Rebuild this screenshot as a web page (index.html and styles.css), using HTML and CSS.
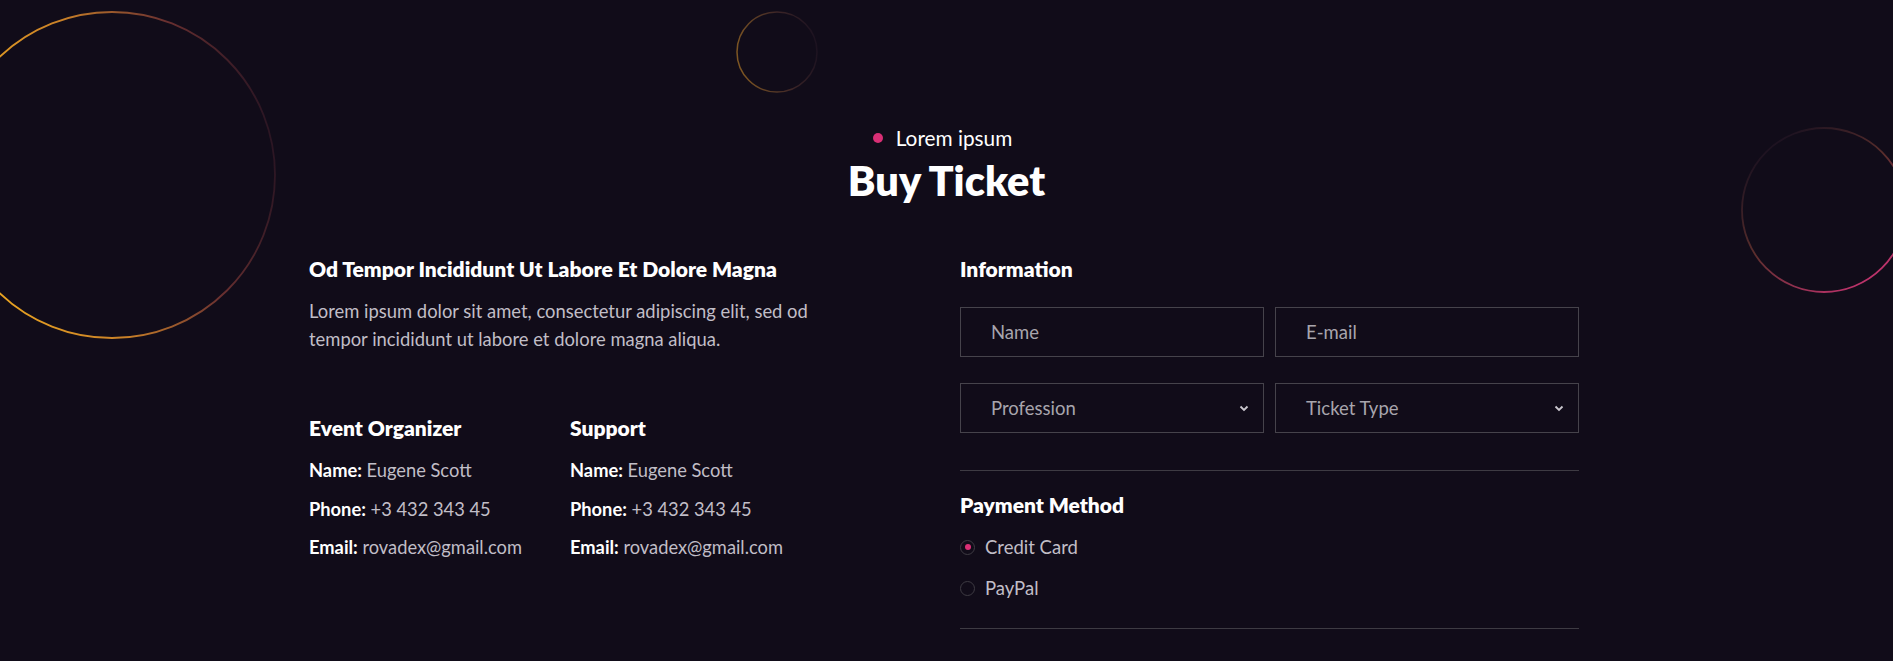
FILE: index.html
```html
<!DOCTYPE html>
<html lang="en">
<head>
<meta charset="utf-8">
<title>Buy Ticket</title>
<link rel="stylesheet" href="styles.css">
</head>
<body>
<section class="ticket">
  <svg class="deco deco-big" width="332" height="332" viewBox="0 0 332 332">
    <defs>
      <linearGradient id="gBig" x1="0" y1="0.6" x2="1" y2="0.4">
        <stop offset="0" stop-color="#f2ae1f"/>
        <stop offset="0.45" stop-color="#c98028"/>
        <stop offset="0.75" stop-color="#6a3030"/>
        <stop offset="1" stop-color="#2a1523"/>
      </linearGradient>
    </defs>
    <circle cx="166" cy="166" r="163" fill="none" stroke="url(#gBig)" stroke-width="1.8"/>
  </svg>
  <svg class="deco deco-small" width="86" height="86" viewBox="0 0 86 86">
    <defs>
      <linearGradient id="gSmall" x1="0" y1="0.6" x2="1" y2="0.4">
        <stop offset="0" stop-color="#7f5722"/>
        <stop offset="0.6" stop-color="#3c2527"/>
        <stop offset="1" stop-color="#1c1220"/>
      </linearGradient>
    </defs>
    <circle cx="43" cy="43" r="40" fill="none" stroke="url(#gSmall)" stroke-width="1.5"/>
  </svg>
  <svg class="deco deco-right" width="170" height="170" viewBox="0 0 170 170">
    <defs>
      <linearGradient id="gRight" x1="0.15" y1="0.1" x2="0.8" y2="0.95">
        <stop offset="0" stop-color="#1a1120"/>
        <stop offset="0.45" stop-color="#5a2e2c"/>
        <stop offset="1" stop-color="#c4336f"/>
      </linearGradient>
    </defs>
    <circle cx="85" cy="85" r="82" fill="none" stroke="url(#gRight)" stroke-width="1.8"/>
  </svg>

  <header class="head">
    <p class="eyebrow"><span class="dot"></span>Lorem ipsum</p>
    <h2 class="title">Buy Ticket</h2>
  </header>

  <div class="container">
    <div class="info">
      <h3 class="info-title">Od Tempor Incididunt Ut Labore Et Dolore Magna</h3>
      <p class="info-text">Lorem ipsum dolor sit amet, consectetur adipiscing elit, sed od tempor incididunt ut labore et dolore magna aliqua.</p>
      <div class="contacts">
        <div class="contact">
          <h4 class="contact-title">Event Organizer</h4>
          <p class="contact-row"><b>Name:</b> Eugene Scott</p>
          <p class="contact-row"><b>Phone:</b> +3 432 343 45</p>
          <p class="contact-row"><b>Email:</b> rovadex@gmail.com</p>
        </div>
        <div class="contact">
          <h4 class="contact-title">Support</h4>
          <p class="contact-row"><b>Name:</b> Eugene Scott</p>
          <p class="contact-row"><b>Phone:</b> +3 432 343 45</p>
          <p class="contact-row"><b>Email:</b> rovadex@gmail.com</p>
        </div>
      </div>
    </div>

    <form class="form">
      <h4 class="form-title">Information</h4>
      <div class="fields">
        <input class="field" type="text" placeholder="Name">
        <input class="field" type="text" placeholder="E-mail">
        <div class="field select"><span>Profession</span>
          <svg class="chev" width="10" height="7" viewBox="0 0 10 7"><path d="M1.5 1.5 L5 5 L8.5 1.5" fill="none" stroke="#cbc8cf" stroke-width="1.8"/></svg>
        </div>
        <div class="field select"><span>Ticket Type</span>
          <svg class="chev" width="10" height="7" viewBox="0 0 10 7"><path d="M1.5 1.5 L5 5 L8.5 1.5" fill="none" stroke="#cbc8cf" stroke-width="1.8"/></svg>
        </div>
      </div>
      <hr class="rule rule-top">
      <h4 class="pay-title">Payment Method</h4>
      <div class="radios">
        <label class="radio"><span class="radio-mark checked"></span>Credit Card</label>
        <label class="radio"><span class="radio-mark"></span>PayPal</label>
      </div>
      <hr class="rule rule-bottom">
    </form>
  </div>
</section>
</body>
</html>
```

FILE: styles.css
```css
* { box-sizing: border-box; }

html, body {
  margin: 0;
  padding: 0;
  background: #110c19;
}

body {
  font-family: "Lato", "Open Sans", sans-serif;
  color: #ffffff;
  height: 661px;
  overflow: hidden;
}

.ticket {
  position: relative;
  padding-top: 126px;
  min-height: 661px;
}

.deco {
  position: absolute;
  display: block;
}
.deco-big { left: -54px; top: 9px; }
.deco-small { left: 734px; top: 9px; }
.deco-right { left: 1739px; top: 125px; }

.head {
  text-align: center;
  position: relative;
}

.eyebrow {
  margin: 0;
  font-size: 20.8px;
  line-height: 24px;
  color: #ffffff;
  display: flex;
  justify-content: center;
  align-items: center;
  gap: 13px;
  padding-right: 8px;
}

.dot {
  width: 10px;
  height: 10px;
  border-radius: 50%;
  background: #d92f75;
  display: inline-block;
}

.title {
  margin: 6px 0 0;
  font-size: 41.5px;
  line-height: 48px;
  font-weight: 800;
}

.container {
  width: 1275px;
  margin: 52px auto 0;
  display: grid;
  grid-template-columns: 651px 619px;
  position: relative;
}

.info-title {
  margin: 0;
  font-size: 21px;
  line-height: 26px;
  font-weight: 800;
}

.info-text {
  margin: 15px 0 0;
  font-size: 18.4px;
  line-height: 28px;
  color: #c1bec7;
  width: 520px;
}

.contacts {
  display: grid;
  grid-template-columns: 261px 261px;
  margin-top: 63px;
}

.contact-title {
  margin: 0 0 18px;
  font-size: 21px;
  line-height: 24px;
  font-weight: 800;
}

.contact-row {
  margin: 0 0 14.5px;
  font-size: 18.3px;
  line-height: 24px;
  color: #c1bec7;
}
.contact-row b {
  color: #ffffff;
  font-weight: 700;
}

.form-title {
  margin: 0;
  font-size: 21px;
  line-height: 26px;
  font-weight: 800;
}

.fields {
  margin-top: 25px;
  display: grid;
  grid-template-columns: 1fr 1fr;
  column-gap: 11px;
  row-gap: 26px;
}

.field {
  height: 50px;
  border: 1px solid #46434b;
  background: transparent;
  padding: 0 30px;
  font-family: inherit;
  font-size: 18.5px;
  color: #a8a5ad;
  outline: none;
  border-radius: 0;
  width: 100%;
  margin: 0;
}
.field::placeholder {
  color: #a8a5ad;
  opacity: 1;
}

.select {
  display: flex;
  align-items: center;
  justify-content: space-between;
  padding-right: 14px;
}
.chev { display: block; }

.rule {
  border: 0;
  height: 1px;
  background: #3e3b43;
  margin: 0;
}
.rule-top { margin-top: 37px; }

.pay-title {
  margin: 22px 0 0;
  font-size: 21px;
  line-height: 24px;
  font-weight: 800;
}

.radios {
  margin-top: 18px;
  display: flex;
  flex-direction: column;
  gap: 17px;
}

.radio {
  display: flex;
  align-items: center;
  gap: 10px;
  font-size: 18.5px;
  line-height: 24px;
  color: #c1bec7;
}

.radio-mark {
  width: 15px;
  height: 15px;
  border-radius: 50%;
  border: 1px solid #3e3b43;
  display: flex;
  align-items: center;
  justify-content: center;
}
.radio-mark.checked::after {
  content: "";
  width: 6px;
  height: 6px;
  border-radius: 50%;
  background: #d92f75;
}

.rule-bottom { margin-top: 28px; }
```
